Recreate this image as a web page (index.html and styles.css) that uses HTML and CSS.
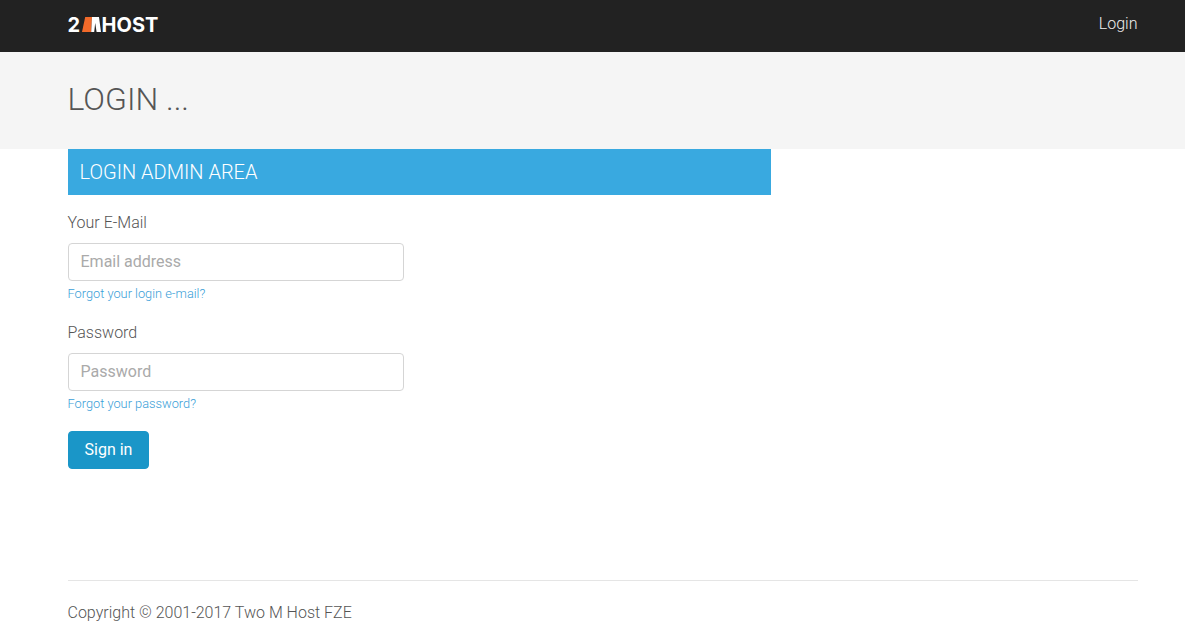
FILE: index.html
```html
<!DOCTYPE html>
<html lang="en">
<head>
<meta charset="utf-8">
<title>Login</title>
<link rel="stylesheet" href="styles.css">
</head>
<body>
<nav class="navbar">
  <a class="logo" href="#"><span>2</span><svg class="logo-m" viewBox="0 0 19 15" width="19" height="15" aria-hidden="true"><path class="m-orange" d="M0 15 L3.2 0 H10 L9.2 15 Z"/><path class="m-white" d="M10 0 H17 L19 15 H14.6 L13.2 6 L12.2 15 H9.2 Z"/></svg><span>HOST</span></a>
  <a class="nav-link" href="#">Login</a>
</nav>
<header class="hero"><h1>LOGIN ...</h1></header>
<main class="content">
  <h2 class="panel-title">LOGIN ADMIN AREA</h2>
  <form class="login-form">
    <div class="field">
      <label for="email">Your E-Mail</label>
      <input id="email" type="text" placeholder="Email address">
      <a class="help" href="#">Forgot your login e-mail?</a>
    </div>
    <div class="field">
      <label for="password">Password</label>
      <input id="password" type="password" placeholder="Password">
      <a class="help" href="#">Forgot your password?</a>
    </div>
    <button class="btn" type="button">Sign in</button>
  </form>
</main>
<footer class="footer"><p>Copyright © 2001-2017 Two M Host FZE</p></footer>
</body>
</html>
```
FILE: styles.css
```css
* { box-sizing: border-box; }
html, body { margin: 0; padding: 0; }
body {
  font-family: Roboto, "Liberation Sans", sans-serif;
  font-weight: 300;
  font-size: 16px;
  line-height: 24px;
  color: #555;
  background: #fff;
  height: 635px;
  overflow: hidden;
}
a { text-decoration: none; }
.navbar {
  height: 52px;
  background: #222;
  display: flex;
  align-items: center;
  justify-content: space-between;
  padding: 0 47.5px 0 67.5px;
}
.logo {
  display: flex;
  align-items: center;
  color: #fff;
  font-family: Inter, "Liberation Sans", sans-serif;
  font-weight: 700;
  font-size: 20px;
  line-height: 24px;
  margin-top: -3px;
}
.logo-m { margin: 0 1px 0 1.5px; }
.m-orange { fill: #f26a2a; }
.m-white { fill: #fff; }
.nav-link { color: #eee; margin-top: -4px; }
.hero {
  height: 97px;
  background: #f5f5f5;
  padding: 27px 0 0 67.5px;
}
.hero h1 {
  margin: 0;
  font-size: 32px;
  line-height: 40px;
  font-weight: 300;
}
.content { padding-left: 67.5px; }
.panel-title {
  margin: 0;
  width: 703px;
  height: 46px;
  background: #39a9e0;
  color: #fff;
  font-size: 20px;
  font-weight: 300;
  line-height: 46px;
  padding-left: 12px;
}
.login-form { width: 336px; padding-top: 16px; }
.field { display: flex; flex-direction: column; align-items: flex-start; margin-bottom: 18px; }
.field label { line-height: 24px; margin-bottom: 8px; }
.field input {
  width: 336px;
  height: 38px;
  border: 1px solid #d5d5d5;
  border-radius: 4px;
  padding: 0 12px 2px;
  font: 400 16px Roboto, sans-serif;
  color: #555;
  background: #fff;
}
.field input::placeholder { color: #aaa; opacity: 1; }
.help { font-size: 12.8px; line-height: 18px; color: #3aa0d8; margin-top: 4px; }
.btn {
  display: block;
  width: 81px;
  height: 38px;
  margin-top: 3px;
  border: 1px solid #1a96c8;
  border-radius: 4px;
  background: #1a96c8;
  color: #fff;
  font: 400 16px Roboto, sans-serif;
  padding: 0 0 2px 1px;
}
.footer {
  margin: 111px 47.5px 0 67.5px;
  border-top: 1px solid #e5e5e5;
  padding-top: 20px;
}
.footer p { margin: 0; }
```
